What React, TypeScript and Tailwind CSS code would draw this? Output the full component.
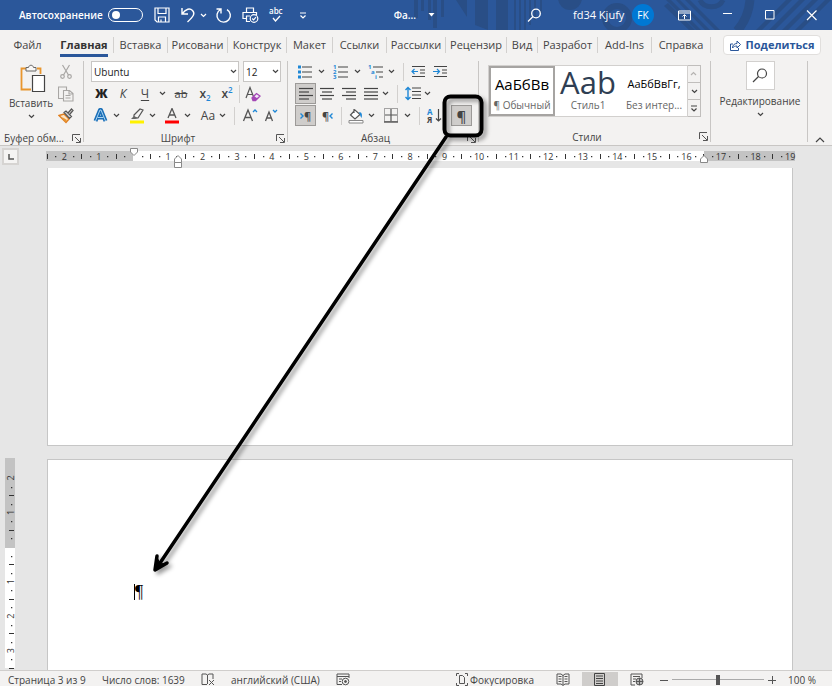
import type { ReactNode } from "react";
import clsx from "clsx";

const tabs = [
  { label: "Файл", width: "w-[55px]" },
  { label: "Главная", width: "w-[59px]", active: true },
  { label: "Вставка", width: "w-[54px]" },
  { label: "Рисовани", width: "w-[60px]" },
  { label: "Конструк", width: "w-[59px]" },
  { label: "Макет", width: "w-[46px]" },
  { label: "Ссылки", width: "w-[54px]" },
  { label: "Рассылки", width: "w-[59px]" },
  { label: "Рецензир", width: "w-[61px]" },
  { label: "Вид", width: "w-[31px]" },
  { label: "Разработ", width: "w-[60px]" },
  { label: "Add-Ins", width: "w-[54px]" },
  { label: "Справка", width: "w-[59px]" },
];

const CM = 34.56;

type ButtonProps = {
  label: string;
  className?: string;
  active?: boolean;
  children?: ReactNode;
};

const Tool = ({ label, className, active, children }: ButtonProps) => (
  <button
    type="button"
    aria-label={label}
    className={clsx(
      "flex h-[21px] shrink-0 items-center justify-center",
      active && "border border-[#9c9a98] bg-[#cfcdcb]",
      className
    )}
  >
    {children}
  </button>
);

const Chevron = () => (
  <svg width="7" height="5" viewBox="0 0 7 5" fill="none" stroke="currentColor" strokeWidth="1.2">
    <path d="M1 1l2.5 2.5L6 1" />
  </svg>
);

const More = ({ label, className = "w-3" }: { label: string; className?: string }) => (
  <Tool label={label} className={className}>
    <Chevron />
  </Tool>
);

const Separator = ({ className }: { className?: string }) => (
  <div className={clsx("h-[18px] w-px shrink-0 bg-[#d2d0ce]", className)} />
);

const Launcher = ({ label }: { label: string }) => (
  <button type="button" aria-label={label} className="shrink-0">
    <svg width="9" height="9" viewBox="0 0 9 9" fill="none" stroke="#555" strokeWidth="1">
      <path d="M.5 7V.5H8M3 3l5 5M8.500 4v4.500H4" />
    </svg>
  </button>
);

type GroupProps = {
  title: string;
  className: string;
  launcher?: boolean;
  children: ReactNode;
};

const Group = ({ title, className, launcher = true, children }: GroupProps) => (
  <section aria-label={title} className={clsx("flex shrink-0", className)}>
    <div className="flex min-w-0 flex-1 flex-col">
      <div className="h-[65px]">{children}</div>
      <div className="mt-1 flex h-[17px] items-center">
        <span className="flex-1 pr-1 text-center whitespace-nowrap">{launcher && title}</span>
        {launcher && <Launcher label={title} />}
      </div>
    </div>
    <div className="ml-[2px] h-[81px] w-px bg-[#c8c6c4]" />
  </section>
);

const Lines = ({ rows }: { rows: [number, number][] }) => (
  <svg width="14" height="14" viewBox="0 0 14 14" stroke="#444" strokeWidth="1.2">
    {rows.map(([from, to], i) => (
      <path key={i} d={`M${from} ${1.5 + i * 3.5}H${to}`} />
    ))}
  </svg>
);

const TitlePattern = () => (
  <svg className="absolute top-0 right-0 h-[30px] w-[432px]" viewBox="0 0 432 30" aria-hidden="true">
    <g fill="#294e86">
      <path d="M14 0h4v18h-4zM21 0h3v11h-3zM28 0h3v20h-3zM33 0h4v28h-4zM41 0h3v17h-3zM51 0h5l11 17V0h-2zM75 0h13v30l-13-5zM96 0h12v30H96zM114 0h2v30h-2zM119 0h2v30h-2zM124 0h2v30h-2zM129 0h2v25h-2zM134 0h2v20h-2zM140 0h2v13h-2z" />
      <circle cx="170" cy="-2" r="12" />
      <path d="M264 6l4-3 27 27h-6zM266 0h5l30 30h-5zM276 0h4l30 30h-5zM285 0h5l30 30h-5z" />
      <path d="M356 30l30-30h6l-30 30zM369 30l30-30h6l-30 30zM382 30l30-30h6l-30 30zM395 30l30-30h6l-30 30z" />
    </g>
    <g fill="none" stroke="#294e86">
      <circle cx="217" cy="18" r="12" strokeWidth="6" />
      <path d="M300 0c4 9 19 9 23 0" strokeWidth="5" />
      <path d="M350 0c-1 12-5 22-13 31" strokeWidth="9" />
    </g>
  </svg>
);

const TitleBar = () => (
  <header className="relative flex h-[30px] shrink-0 items-center bg-[#2b579a] text-white">
    <TitlePattern />
    <div className="relative flex flex-1 items-center">
      <label className="flex items-center pl-[19px] font-semibold">
        <span className="w-[89px]">Автосохранение</span>
        <input type="checkbox" className="peer sr-only" />
        <span className="flex h-[14px] w-[35px] items-center rounded-full border border-white pl-[3px]">
          <span className="size-2 rounded-full bg-white" />
        </span>
      </label>
      <button type="button" aria-label="Сохранить" className="ml-[11px]">
        <svg width="16" height="16" viewBox="0 0 16 16" fill="none" stroke="white" strokeWidth="1.2">
          <path d="M1 1h14v14H3l-2-2zM4 1v5.500h8V1M4.500 15v-5h7v5M7 15v-2.500" />
        </svg>
      </button>
      <button type="button" aria-label="Отменить" className="ml-[10px]">
        <svg width="16" height="16" viewBox="0 0 16 16" fill="none" stroke="white" strokeWidth="1.4">
          <path d="M2 1v6h6M2 7C6 1.500 10 1 12.500 3.500c3 3 1 6-5 11.500" />
        </svg>
      </button>
      <button type="button" aria-label="Список отмены" className="ml-1">
        <Chevron />
      </button>
      <button type="button" aria-label="Повторить" className="ml-[8px]">
        <svg width="17" height="16" viewBox="0 0 17 16" fill="none" stroke="white" strokeWidth="1.400">
          <path d="M5.500 2.500A6.700 6.700 0 1 0 12 2.600M1.500 2h4.500v4.500" />
        </svg>
      </button>
      <button type="button" aria-label="Печать" className="ml-[10px]">
        <svg width="17" height="16" viewBox="0 0 17 16" fill="none" stroke="white" strokeWidth="1.200">
          <path d="M4.500 5V1h7v4M4 11.500H1V5.500h13.500V8M4 9h4M4.500 9v5.500H8" />
          <circle cx="12" cy="11.500" r="3.800" />
          <path d="M10.200 11.500l1.400 1.400 2.400-2.700" />
        </svg>
      </button>
      <button type="button" aria-label="Правописание" className="ml-[10px]">
        <svg className="overflow-visible" width="15" height="16" viewBox="0 0 15 16" fill="none">
          <text x="0" y="7" fill="white" fontSize="8" fontWeight="600">abc</text>
          <path d="M4 11l2.500 3L11 9" stroke="white" strokeWidth="1.300" />
        </svg>
      </button>
      <button type="button" aria-label="Настройка панели" className="ml-[15px]">
        <svg width="8" height="7" viewBox="0 0 8 7" fill="none" stroke="white" strokeWidth="1.200">
          <path d="M1 1h6M1.500 3.500L4 6l2.500-2.500" />
        </svg>
      </button>
    </div>
    <div className="relative mr-[92px] flex items-center font-semibold">
      Фа...
      <svg className="ml-3" width="7" height="4" viewBox="0 0 7 4" fill="white">
        <path d="M0.500 0h6L3.500 3.500z" />
      </svg>
    </div>
    <div className="relative flex w-[305px] items-center">
      <button type="button" aria-label="Поиск">
        <svg width="16" height="15" viewBox="0 0 16 15" fill="none" stroke="white" strokeWidth="1.300">
          <circle cx="9" cy="5.500" r="4.300" />
          <path d="M6 8.500L1 13.500" />
        </svg>
      </button>
      <span className="ml-[30px] w-[59px] text-[11px] font-medium">fd34 Kjufy</span>
      <span className="flex size-[22px] items-center justify-center rounded-full bg-[#0078d4]">FK</span>
      <button type="button" aria-label="Параметры ленты" className="ml-6">
        <svg width="13" height="11" viewBox="0 0 13 11" fill="none" stroke="white">
          <path d="M.5 1h12v9H.500zM.5 3h12M6.500 9V5M4.500 6.500l2-2 2 2" />
        </svg>
      </button>
      <button type="button" aria-label="Свернуть" className="ml-[31px]">
        <svg width="11" height="11" viewBox="0 0 11 11" stroke="white">
          <path d="M1 3.500h9" />
        </svg>
      </button>
      <button type="button" aria-label="Развернуть" className="ml-[31px]">
        <svg width="11" height="11" viewBox="0 0 11 11" fill="none" stroke="white">
          <path d="M1.500.500h8.500v8.500H1.500z" />
        </svg>
      </button>
      <button type="button" aria-label="Закрыть" className="ml-[31px]">
        <svg width="11" height="11" viewBox="0 0 11 11" stroke="white" strokeWidth="1.200">
          <path d="M1 .500l9.500 9.500M10.500.500L1 10" />
        </svg>
      </button>
    </div>
  </header>
);

const TabStrip = () => (
  <nav className="flex h-[30px] shrink-0 items-center text-[11px]">
    {tabs.map((tab, i) => (
      <button
        key={tab.label}
        type="button"
        className={clsx(
          "flex h-4 shrink-0 items-center justify-center whitespace-nowrap",
          i > 0 && "border-r border-[#d2d0ce]",
          tab.width
        )}
      >
        <span
          className={clsx(
            "leading-[18px]",
            tab.active && "mt-[3px] border-b-[3px] border-[#2b579a] font-bold text-[#333]"
          )}
        >
          {tab.label}
        </span>
      </button>
    ))}
    <button
      type="button"
      className="mr-[11px] ml-auto flex h-5 w-[98px] shrink-0 items-center justify-center gap-[5px] rounded-sm border border-[#e1dfdd] bg-white font-bold text-[#2b579a]"
    >
      <svg width="11" height="11" viewBox="0 0 11 11" fill="none" stroke="currentColor">
        <path d="M3 4H.500v6.500h8V8M2.500 8c0-3 2-4.500 4.500-4.500V1l3.500 3.500L7 8V6C5 6 3.500 6.500 2.500 8z" />
      </svg>
      Поделиться
    </button>
  </nav>
);

const ClipboardGroup = () => (
  <Group title="Буфер обм..." className="w-[84px]">
    <div className="flex">
      <button type="button" className="flex w-[54px] flex-col items-center pl-2">
        <svg className="mt-[3px] ml-1" width="26" height="29" viewBox="0 0 26 29" fill="none">
          <path d="M6 4.500H1.500v21H11M17 4.500h3.500V10" stroke="#e8962e" strokeWidth="1.800" />
          <path d="M6 7V3.500h2.500C9 .500 13 .500 13.500 3.500H16V7z" fill="#f8f7f6" stroke="#666" />
          <path d="M12.500 11.500h12v16h-12z" fill="white" stroke="#444" strokeWidth="1.200" />
        </svg>
        <span className="mt-[2px] leading-4">Вставить</span>
        <span className="mt-[3px]"><Chevron /></span>
      </button>
      <div className="flex flex-col gap-px pl-[2px]">
        <Tool label="Вырезать" className="w-5">
          <svg width="12" height="16" viewBox="0 0 12 16" fill="none" stroke="#a8a6a4" strokeWidth="1.200">
            <path d="M2.500 1l6 10M9.500 1l-6 10" />
            <circle cx="2.500" cy="12.500" r="1.800" />
            <circle cx="9.500" cy="12.500" r="1.800" />
          </svg>
        </Tool>
        <Tool label="Копировать" className="w-5">
          <svg width="16" height="16" viewBox="0 0 16 16" fill="none" stroke="#a8a6a4" strokeWidth="1.100">
            <path d="M5.500 12.500h-5V1h8v3M5.500 4.500h6l3.500 3V15H5.500zM11 4.500V8h4M7.500 9.500h5M7.500 12h5" />
          </svg>
        </Tool>
        <Tool label="Формат по образцу" className="w-5">
          <svg width="16" height="16" viewBox="0 0 16 16" fill="none">
            <path d="M1 7.500l5-1.500 5 5-3 3.500z" fill="#fbe3c4" stroke="#e07f1f" strokeWidth="1.400" />
            <path d="M4 9l5 3-1.500 2z" fill="#e8962e" />
            <path d="M6 4.500l2-1.500 5.500 5.500-2 2zM10 5l3.500-4L15 2.500 12 6" fill="#d8d6d4" stroke="#555" strokeWidth="1.200" />
          </svg>
        </Tool>
      </div>
    </div>
  </Group>
);

const FontGroup = () => (
  <Group title="Шрифт" className="w-[204px]">
    <div className="flex flex-col gap-px pl-[7px]">
      <div className="flex h-[21px] gap-1">
        <label className="relative h-[21px] w-[148px]">
          <select aria-label="Шрифт" className="h-full w-full appearance-none border border-[#c8c6c4] bg-white pl-[2px] text-[#222]">
            <option>Ubuntu</option>
          </select>
          <span className="pointer-events-none absolute top-2 right-[2px]"><Chevron /></span>
        </label>
        <label className="relative h-[21px] w-[38px]">
          <select aria-label="Размер шрифта" className="h-full w-full appearance-none border border-[#c8c6c4] bg-white pl-[2px] text-[#222]">
            <option>12</option>
          </select>
          <span className="pointer-events-none absolute top-2 right-[2px]"><Chevron /></span>
        </label>
      </div>
      <div className="flex items-center text-[12px]">
        <Tool label="Полужирный" className="w-[21px] font-extrabold text-[#222]">Ж</Tool>
        <Tool label="Курсив" className="w-[22px] italic">К</Tool>
        <Tool label="Подчеркнутый" className="w-[22px] underline underline-offset-2">Ч</Tool>
        <More label="Виды подчеркивания" />
        <Tool label="Зачеркнутый" className="ml-[2px] w-[22px] text-[11px] line-through">ab</Tool>
        <Tool label="Подстрочный" className="ml-[2px] w-[22px] font-semibold">
          x<span className="mt-2 text-[8px] text-[#1e87d6]">2</span>
        </Tool>
        <Tool label="Надстрочный" className="w-[22px] font-semibold">
          x<span className="mb-2 text-[8px] text-[#1e87d6]">2</span>
        </Tool>
        <Separator className="ml-px" />
        <Tool label="Очистить форматирование" className="ml-[3px] w-5">
          <svg width="16" height="16" viewBox="0 0 16 16" fill="none">
            <path d="M1 12L5 1.500 9 12M2.500 8.500h5.500" stroke="#555" strokeWidth="1.200" />
            <path d="M7 12l4.500-4.500L15 10l-4.500 4.500H8z" fill="#f3e6f7" stroke="#a346b5" strokeWidth="1.300" />
            <path d="M7 12l2-2 3.500 2.500-2 2H8z" fill="#a346b5" />
          </svg>
        </Tool>
      </div>
      <div className="flex items-center">
        <Tool label="Текстовые эффекты" className="w-[19px]">
          <svg width="15" height="15" viewBox="0 0 15 15" fill="none" strokeLinejoin="round">
            <path d="M2.500 13L7 2h1l4.500 11M4.500 9.500h6" stroke="#1a6fb8" strokeWidth="4" />
            <path d="M2.500 13L7 2h1l4.500 11M4.500 9.500h6" stroke="#a9d3f2" strokeWidth="1" />
          </svg>
        </Tool>
        <More label="Виды эффектов" />
        <Tool label="Цвет выделения" className="ml-1 w-[21px]">
          <svg width="16" height="16" viewBox="0 0 16 16" fill="none">
            <path d="M5 7l6-6 3 1-5 8H5z" fill="#f3f2f1" stroke="#555" strokeWidth="1.200" />
            <path d="M5 8l-3 3h4l3-1z" fill="#666" />
            <path d="M1 12.500h14v3H1z" fill="#fff200" />
          </svg>
        </Tool>
        <More label="Цвета выделения" className="w-[10px]" />
        <Tool label="Цвет текста" className="ml-[4px] w-[21px]">
          <svg width="16" height="16" viewBox="0 0 16 16" fill="none">
            <path d="M4 10L8 .500 12 10M5.500 7h5" stroke="#555" strokeWidth="1.300" />
            <path d="M1 12.500h14v3H1z" fill="#f00" />
          </svg>
        </Tool>
        <More label="Цвета текста" className="w-[10px]" />
        <Tool label="Регистр" className="ml-[7px] w-[18px] text-[12px]">Aa</Tool>
        <More label="Варианты регистра" className="w-[10px]" />
        <Separator className="ml-[7px]" />
        <Tool label="Увеличить шрифт" className="ml-[4px] w-[22px]">
          <svg width="17" height="15" viewBox="0 0 17 15" fill="none" strokeWidth="1.300">
            <path d="M1.500 13L6 2l4.500 11M3 9.500h6" stroke="#555" />
            <path d="M11 4l2-2 2 2" stroke="#1e87d6" />
          </svg>
        </Tool>
        <Tool label="Уменьшить шрифт" className="w-[20px]">
          <svg width="15" height="15" viewBox="0 0 15 15" fill="none" strokeWidth="1.300">
            <path d="M1.500 13L5 4l3.500 9M2.500 10h5" stroke="#555" />
            <path d="M9 2l2 2 2-2" stroke="#1e87d6" />
          </svg>
        </Tool>
      </div>
    </div>
  </Group>
);

const ParagraphGroup = () => (
  <Group title="Абзац" className="w-[191px]">
    <div className="flex flex-col gap-px pl-[7px]">
      <div className="flex items-center">
        <Tool label="Маркеры" className="w-5">
          <svg width="16" height="14" viewBox="0 0 16 14" fill="none">
            <path d="M5 2h10M5 7h10M5 12h10" stroke="#444" strokeWidth="1.200" />
            <path d="M1 .5h3v3H1zM1 5.500h3v3H1zM1 10.500h3v3H1z" fill="#1e87d6" />
          </svg>
        </Tool>
        <More label="Виды маркеров" />
        <Tool label="Нумерация" className="ml-1 w-5">
          <svg width="16" height="18" viewBox="0 0 16 18" fill="none">
            <path d="M5 4h10M5 9h10M5 14h10" stroke="#444" strokeWidth="1.200" />
            <g fill="#1e87d6" fontSize="6" fontWeight="bold">
              <text x="0" y="6">1</text>
              <text x="0" y="11">2</text>
              <text x="0" y="16">3</text>
            </g>
          </svg>
        </Tool>
        <More label="Виды нумерации" />
        <Tool label="Многоуровневый список" className="ml-1 w-[18px]">
          <svg width="16" height="18" viewBox="0 0 16 18" fill="none">
            <path d="M5 4h10M8 9h7M11 14h4" stroke="#444" strokeWidth="1.200" />
            <g fill="#1e87d6" fontSize="6" fontWeight="bold">
              <text x="0" y="6">1</text>
              <text x="3" y="11">a</text>
              <text x="7" y="16">i</text>
            </g>
          </svg>
        </Tool>
        <More label="Виды списков" />
        <Separator className="ml-[6px]" />
        <Tool label="Уменьшить отступ" className="ml-1 w-[21px]">
          <svg width="15" height="13" viewBox="0 0 15 13" fill="none" strokeWidth="1.200">
            <path d="M1 1.500h13M9 5h5M9 8h5M1 11.500h13" stroke="#444" />
            <path d="M7 6.500H1M3.500 4L1 6.500 3.500 9" stroke="#1e87d6" />
          </svg>
        </Tool>
        <Tool label="Увеличить отступ" className="w-[22px]">
          <svg width="15" height="13" viewBox="0 0 15 13" fill="none" strokeWidth="1.200">
            <path d="M1 1.500h13M9 5h5M9 8h5M1 11.500h13" stroke="#444" />
            <path d="M0 6.500h6.500M4 4l2.500 2.500L4 9" stroke="#1e87d6" />
          </svg>
        </Tool>
      </div>
      <div className="flex items-center">
        <Tool label="По левому краю" active className="w-[21px]">
          <Lines rows={[[0, 14], [0, 10], [0, 14], [0, 10]]} />
        </Tool>
        <Tool label="По центру" className="w-[22px]">
          <Lines rows={[[0, 14], [2, 12], [0, 14], [2, 12]]} />
        </Tool>
        <Tool label="По правому краю" className="w-[22px]">
          <Lines rows={[[0, 14], [4, 14], [0, 14], [4, 14]]} />
        </Tool>
        <Tool label="По ширине" className="w-[22px]">
          <Lines rows={[[0, 14], [0, 14], [0, 14], [0, 14]]} />
        </Tool>
        <More label="Выравнивание" className="w-[7px]" />
        <Separator className="ml-[8px]" />
        <Tool label="Интервал" className="ml-[6px] w-[18px]">
          <svg width="16" height="15" viewBox="0 0 16 15" fill="none" strokeWidth="1.200">
            <path d="M7 2h9M7 5.500h9M7 9h9M7 12.500h9" stroke="#444" />
            <path d="M3 1.500v12M.5 4L3 1.500 5.500 4M.5 11L3 13.500 5.500 11" stroke="#1e87d6" strokeWidth="1.400" />
          </svg>
        </Tool>
        <More label="Интервалы" className="w-[10px]" />
      </div>
      <div className="flex items-center">
        <Tool label="Слева направо" active className="w-[21px] text-[11px] font-semibold">
          <svg width="4" height="6" viewBox="0 0 4 6" fill="none" stroke="#1e87d6" strokeWidth="1.400"><path d="M.5.500L3 3 .500 5.500" /></svg>
          ¶
        </Tool>
        <Tool label="Справа налево" className="ml-px w-[21px] text-[11px] font-semibold">
          ¶
          <svg width="4" height="6" viewBox="0 0 4 6" fill="none" stroke="#1e87d6" strokeWidth="1.400"><path d="M3.500.500L1 3l2.500 2.500" /></svg>
        </Tool>
        <Separator className="ml-[3px]" />
        <Tool label="Заливка" className="ml-[5px] w-[18px]">
          <svg width="16" height="16" viewBox="0 0 16 16" fill="none">
            <path d="M2.500 7L7 2l5 4.500-5 4.500zM6 1v4" stroke="#555" strokeWidth="1.200" fill="#fff" />
            <path d="M11 4c3 0 3.500 3 2.500 6C12 8 12 6 11 4z" fill="#1e87d6" />
            <path d="M1 12.500h14v2.500H1z" fill="#fff" stroke="#888" />
          </svg>
        </Tool>
        <More label="Цвета заливки" className="w-3" />
        <Tool label="Границы" className="ml-[5px] w-[18px]">
          <svg width="14" height="15" viewBox="0 0 14 15" fill="none" stroke="#555">
            <path d="M.5.500h13v13H.500z" strokeDasharray="1 1" />
            <path d="M7 1v12M1 7h12" strokeWidth="1.200" />
            <path d="M0 14h14" strokeWidth="1.400" />
          </svg>
        </Tool>
        <More label="Виды границ" className="w-[14px]" />
        <Separator className="ml-[5px]" />
        <Tool label="Сортировка" className="ml-1 w-5">
          <svg width="16" height="19" viewBox="0 0 16 19" fill="none">
            <text x="1" y="9" fill="#1e87d6" fontSize="8" fontWeight="bold">А</text>
            <text x="1" y="17" fill="#444" fontSize="8" fontWeight="bold">Я</text>
            <path d="M12.500 3v12M10 12.500l2.500 2.500 2.500-2.500" stroke="#444" strokeWidth="1.200" />
          </svg>
        </Tool>
        <Tool label="Отобразить все знаки" active className="ml-[7px] w-[21px] text-[15px] font-semibold">¶</Tool>
      </div>
    </div>
  </Group>
);

const StylesGroup = () => (
  <Group title="Стили" className="w-[232px]">
    <div className="flex pt-1 pl-[9px] text-[#666]">
      <div className="flex h-[52px] w-[200px] border border-[#d2d0ce] bg-white">
        <button type="button" className="flex w-[66px] flex-col items-center justify-end border-2 border-[#a6a4a2] pt-1">
          <span className="flex h-6 items-center text-[15px] whitespace-nowrap text-black">АаБбВв</span>
          <span className="leading-[18px] whitespace-nowrap">¶ Обычный</span>
        </button>
        <button type="button" className="flex w-[66px] flex-col items-center justify-end pb-[2px]">
          <span className="flex h-[27px] items-center text-[31px] leading-[27px] whitespace-nowrap text-[#2f3e53]">Ааb</span>
          <span className="leading-[18px]">Стиль1</span>
        </button>
        <button type="button" className="flex w-[66px] flex-col items-center justify-end pb-[2px]">
          <span className="flex h-6 items-center text-[11px] whitespace-nowrap text-black">АаБбВвГг,</span>
          <span className="leading-[18px] whitespace-nowrap">Без интер...</span>
        </button>
      </div>
      <div className="flex h-[52px] w-[13px] flex-col border border-l-0 border-[#c0bebc]">
        <button type="button" aria-label="Вверх" className="flex flex-1 rotate-180 items-center justify-center text-[#b5b3b1]"><Chevron /></button>
        <button type="button" aria-label="Вниз" className="flex flex-1 items-center justify-center border-y border-[#c0bebc] text-[#444]"><Chevron /></button>
        <button type="button" aria-label="Все стили" className="flex flex-1 items-center justify-center">
          <svg width="8" height="7" viewBox="0 0 8 7" fill="none" stroke="#444" strokeWidth="1.200">
            <path d="M1 1h6M1.500 3.500L4 6l2.500-2.500" />
          </svg>
        </button>
      </div>
    </div>
  </Group>
);

const EditingGroup = () => (
  <Group title="Редактирование" className="w-[97px]" launcher={false}>
    <button type="button" className="flex w-full flex-col items-center pl-1">
      <span className="flex size-[29px] items-center justify-center border border-[#d2d0ce] bg-white">
        <svg width="16" height="16" viewBox="0 0 16 16" fill="none" stroke="#444" strokeWidth="1.200">
          <circle cx="10" cy="5.500" r="4.500" />
          <path d="M6.500 8.500L1 14" />
        </svg>
      </span>
      <span className="mt-[2px] leading-[18px]">Редактирование</span>
      <span className="mt-[2px]"><Chevron /></span>
    </button>
  </Group>
);

const Ribbon = () => (
  <div className="flex h-[86px] shrink-0 border-b border-[#c8c6c4] pt-px">
    <ClipboardGroup />
    <FontGroup />
    <ParagraphGroup />
    <StylesGroup />
    <EditingGroup />
    <button type="button" aria-label="Свернуть ленту" className="mr-[7px] mb-[2px] ml-auto self-end">
      <svg width="10" height="6" viewBox="0 0 10 6" fill="none" stroke="#444" strokeWidth="1.200">
        <path d="M1 5l4-4 4 4" />
      </svg>
    </button>
  </div>
);

const quarterMarks = [0.25, 0.5, 0.75];

const HorizontalRuler = () => (
  <div className="flex h-[22px] shrink-0">
    <div className="flex w-[46px] shrink-0 pt-[2px] pl-[2px]">
      <button type="button" aria-label="Табуляция" className="flex size-[17px] items-center justify-center border-2 border-[#d6d4d2] bg-[#f5f4f3]">
        <svg width="6" height="6" viewBox="0 0 6 6" fill="none" stroke="#555" strokeWidth="1.500">
          <path d="M1 0v5h5" />
        </svg>
      </button>
    </div>
    <svg className="h-[22px] w-[752px] shrink-0" viewBox="0 0 752 22" fontSize="9" textAnchor="middle" fill="#333">
      <path d="M0 5h87v10H0zM658 5h91v10h-91z" fill="#c3c3c3" />
      <path d="M87 5h571v10H87z" fill="white" />
      {Array.from({ length: 22 }, (_, i) => i - 3).map((cm) => (
        <g key={cm}>
          {cm !== 0 && cm > -3 && (
            <text x={87.5 + cm * CM} y="13.500">{Math.abs(cm)}</text>
          )}
          {quarterMarks.map((q) => {
            const x = Math.round(87 + (cm + q) * CM);
            if (x < 1) return null;
            return q === 0.5 ? (
              <path key={q} d={`M${x} 8h1v5h-1z`} />
            ) : (
              <path key={q} d={`M${x} 10h1.300v1.300h-1.300z`} />
            );
          })}
        </g>
      ))}
      <text x={87.5 + 19 * CM} y="13.500">19</text>
      <g fill="white" stroke="#888">
        <path d="M84.500 2.500h7V6L88 9.500 84.500 6z" />
        <path d="M128.500 16.500V13l3.500-3.500 3.500 3.500v3.500zM128.500 16.500h7v5h-7z" />
        <path d="M654.500 16.500V13l3.500-3.500 3.500 3.500v3.500z" />
      </g>
    </svg>
  </div>
);

const VerticalRuler = () => (
  <svg className="h-[212px] w-[10px]" viewBox="0 0 10 212" fontSize="9" textAnchor="middle" fill="#333">
    <path d="M0 0h10v90H0z" fill="#c3c3c3" />
    <path d="M0 90h10v120H0z" fill="white" />
    {[-3, -2, -1, 0, 1, 2, 3].map((cm) => (
      <g key={cm}>
        {cm !== 0 && cm > -3 && (
          <text transform={`translate(9 ${89 + cm * CM}) rotate(-90)`}>{Math.abs(cm)}</text>
        )}
        {quarterMarks.map((q) => {
          const y = Math.round(89 + (cm + q) * CM);
          if (y < 20 || y > 210) return null;
          return q === 0.5 ? (
            <path key={q} d={`M4 ${y}h5v1H4z`} />
          ) : (
            <path key={q} d={`M6 ${y}h1.300v1.300H6z`} />
          );
        })}
      </g>
    ))}
  </svg>
);

const Workspace = () => (
  <main className="flex flex-1">
    <div className="w-[47px] shrink-0 pt-[290px] pl-[5px]">
      <VerticalRuler />
    </div>
    <div className="mr-[39px] flex flex-1 flex-col">
      <div className="h-[278px] border border-t-0 border-[#c6c6c6] bg-white" />
      <div className="mt-[13px] flex-1 border border-b-0 border-[#c6c6c6] bg-white pt-[124px] pl-[86px]">
        <p className="flex h-4 w-3 items-center border-l border-black font-['Liberation_Serif',serif] text-[18px] leading-4 text-black">
          ¶
        </p>
      </div>
    </div>
  </main>
);

const StatusBar = () => (
  <footer className="flex h-[17px] shrink-0 items-center overflow-hidden border-t border-[#d0cecc] bg-[#f3f2f1] pt-px whitespace-nowrap">
    <span className="ml-2 w-[94px]">Страница 3 из 9</span>
    <span className="w-[99px]">Число слов: 1639</span>
    <svg className="shrink-0" width="14" height="13" viewBox="0 0 14 13" fill="none" stroke="#555">
      <path d="M6 11.500H1V1h4l1.500 1V11M6.500 2L8 1h4v5M8 7l5 5M13 7l-5 5" />
    </svg>
    <span className="ml-4 w-[105px]">английский (США)</span>
    <svg className="shrink-0" width="14" height="13" viewBox="0 0 14 13" fill="none" stroke="#555">
      <path d="M6 11.500H1V1h12v4M1 3.500h12M3 6h3M3 8.500h2" />
      <circle cx="9.500" cy="8.500" r="3.300" />
      <circle cx="9.500" cy="8.500" r="1" fill="#555" />
    </svg>
    <button type="button" className="ml-auto flex items-center gap-[2px]">
      <svg width="12" height="13" viewBox="0 0 12 13" fill="none" stroke="#555">
        <path d="M3 .500H.500V3M9 .500h2.500V3M3 12.500H.500V10M9 12.500h2.500V10M3.500 2.500h3l2 2v6h-5z" />
      </svg>
      Фокусировка
    </button>
    <button type="button" aria-label="Режим чтения" className="ml-[22px]">
      <svg width="14" height="13" viewBox="0 0 14 13" fill="none" stroke="#555">
        <path d="M7 2.500L5 1H1v10h4l2 1.500L9 11h4V1H9zM7 2v10M2.500 3.500h3M2.500 6h3M2.500 8.500h3M8.500 3.500h3M8.500 6h3M8.500 8.500h3" />
      </svg>
    </button>
    <button type="button" aria-label="Разметка страницы" className="ml-3 flex h-full w-[36px] items-center justify-center bg-[#cfcdcb]">
      <svg width="11" height="13" viewBox="0 0 11 13" fill="none" stroke="#444">
        <path d="M.5.500h10v12H.500zM2 3h7M2 5.500h7M2 8h7M2 10.500h7" />
      </svg>
    </button>
    <button type="button" aria-label="Веб-документ" className="ml-3">
      <svg width="14" height="13" viewBox="0 0 14 13" fill="none" stroke="#555">
        <path d="M5 12H1V1h11v4M3 3.500h7M3 6h3M3 8.500h2" />
        <circle cx="9.500" cy="8.500" r="3.500" fill="#bbb" />
        <path d="M6 8.500h7M9.500 5v7" />
      </svg>
    </button>
    <button type="button" aria-label="Уменьшить" className="ml-4">
      <svg width="8" height="8" viewBox="0 0 8 8" stroke="#555"><path d="M0 4.500h8" /></svg>
    </button>
    <input
      type="range"
      aria-label="Масштаб"
      className="ml-1 h-3 w-[92px] appearance-none bg-[linear-gradient(#aaa,#aaa)] bg-[length:100%_1px] bg-center bg-no-repeat [&::-webkit-slider-thumb]:h-[10px] [&::-webkit-slider-thumb]:w-[4px] [&::-webkit-slider-thumb]:appearance-none [&::-webkit-slider-thumb]:bg-[#555]"
    />
    <button type="button" aria-label="Увеличить" className="ml-1">
      <svg width="8" height="8" viewBox="0 0 8 8" stroke="#555"><path d="M0 4.500h8M4.500 0v8" /></svg>
    </button>
    <span className="mr-[16px] ml-3">100 %</span>
  </footer>
);

// Frame around the pilcrow button with an arrow down to the mark in the text
const Callout = () => (
  <svg className="pointer-events-none absolute top-0 left-0 h-[686px] w-[832px]" viewBox="0 0 832 686" fill="none" aria-hidden="true">
    <defs>
      <filter id="shadow" x="-10%" y="-10%" width="120%" height="120%">
        <feDropShadow dx="3" dy="3" stdDeviation="2" floodOpacity="0.4" />
      </filter>
    </defs>
    <g stroke="black" strokeWidth="4" strokeLinecap="round" strokeLinejoin="round" filter="url(#shadow)">
      <rect x="444.500" y="96.500" width="37" height="39" rx="6" />
      <path d="M446 137L156 569" strokeWidth="3.500" />
      <path d="M157 556l-2 14 12-7" strokeWidth="3.500" />
      <path d="M155 570l2-13 3 7 7-1z" fill="black" strokeWidth="1" />
    </g>
  </svg>
);

const App = () => (
  <div className="relative flex min-h-screen flex-col overflow-hidden bg-[#e6e6e6] font-['Open_Sans','Noto_Sans',sans-serif] text-[10px] leading-4 text-[#444]">
    <TitleBar />
    <div className="flex flex-col bg-[#f3f2f1]">
      <TabStrip />
      <Ribbon />
    </div>
    <HorizontalRuler />
    <Workspace />
    <StatusBar />
    <Callout />
  </div>
);

export default App;
